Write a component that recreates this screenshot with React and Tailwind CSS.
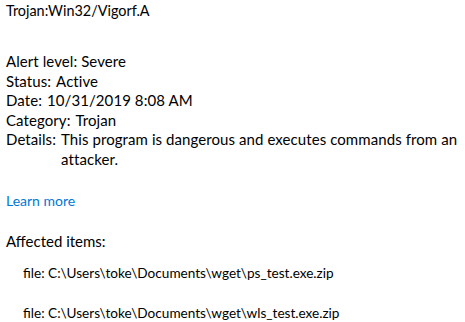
const details = [
  { label: 'Status:', value: 'Active' },
  { label: 'Date:', value: '10/31/2019 8:08 AM' },
  { label: 'Category:', value: 'Trojan' },
  { label: 'Details:', value: 'This program is dangerous and executes commands from an attacker.' },
];

const files = [
  'C:\\Users\\toke\\Documents\\wget\\ps_test.exe.zip',
  'C:\\Users\\toke\\Documents\\wget\\wls_test.exe.zip',
];

const App = () => {
  return (
    <div className="w-[465px] h-[322px] overflow-hidden bg-white text-black pl-[6px] font-['Segoe_UI','Lato',sans-serif]">
      <div className="text-[14.4px] leading-[20px] pt-[1px]">Trojan:Win32/Vigorf.A</div>

      <div className="mt-[31px] text-[15px] leading-[19.5px] tracking-[0.08px]">
        <div>Alert level: Severe</div>
        {details.map((row) => (
          <div key={row.label} className="flex gap-[5px]">
            <span className="shrink-0">{row.label}</span>
            <span className="w-[402px]">{row.value}</span>
          </div>
        ))}
      </div>

      <a href="#" className="block mt-[22px] text-[14px] leading-[20px] text-[#0078d7]">
        Learn more
      </a>

      <div className="mt-[20px] text-[15px] leading-[20px]">Affected items:</div>

      <div className="pl-[17px] mt-[12px] text-[13.6px] leading-[20px]">
        {files.map((f) => (
          <div key={f} className="mb-[20px]">file: {f}</div>
        ))}
      </div>
    </div>
  );
};

export default App;
